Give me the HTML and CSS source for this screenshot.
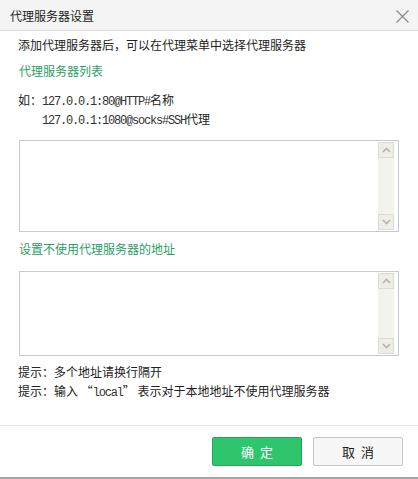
FILE: index.html
```html
<!DOCTYPE html>
<html lang="zh-CN">
<head>
    <meta charset="UTF-8">
    <title>代理服务器设置</title>
    <link rel="stylesheet" href="styles.css">
</head>
<body>

<div class="dialog">
    <div class="dialog-head">
        <span class="dialog-title">代理服务器设置</span>
        <svg class="close-btn" width="13" height="13" viewBox="0 0 13 13">
            <path d="M0.5 0.5 L12.5 12.5 M12.5 0.5 L0.5 12.5" stroke="#8a8a8a" stroke-width="1.2" fill="none"/>
        </svg>
    </div>

    <div class="dialog-body">
        <p class="intro">添加代理服务器后，可以在代理菜单中选择代理服务器</p>

        <!-- 代理列表 -->
        <h3 class="section-title">代理服务器列表</h3>
        <div class="example">
            <div class="line">如：<span class="mono">127.0.0.1:80@HTTP#</span>名称</div>
            <div class="line indent"><span class="mono">127.0.0.1:1080@socks#SSH</span>代理</div>
        </div>
        <div class="field field-list">
            <textarea></textarea>
            <div class="scrollbar">
                <div class="scroll-btn">
                    <svg width="9" height="6" viewBox="0 0 9 6"><path d="M1 5 L4.5 1.5 L8 5" stroke="#b4b4ac" stroke-width="1.6" fill="none"/></svg>
                </div>
                <div class="scroll-btn">
                    <svg width="9" height="6" viewBox="0 0 9 6"><path d="M1 1 L4.5 4.5 L8 1" stroke="#b4b4ac" stroke-width="1.6" fill="none"/></svg>
                </div>
            </div>
        </div>

        <!-- 例外地址 -->
        <h3 class="section-title section-title-2">设置不使用代理服务器的地址</h3>
        <div class="field field-bypass">
            <textarea></textarea>
            <div class="scrollbar">
                <div class="scroll-btn">
                    <svg width="9" height="6" viewBox="0 0 9 6"><path d="M1 5 L4.5 1.5 L8 5" stroke="#b4b4ac" stroke-width="1.6" fill="none"/></svg>
                </div>
                <div class="scroll-btn">
                    <svg width="9" height="6" viewBox="0 0 9 6"><path d="M1 1 L4.5 4.5 L8 1" stroke="#b4b4ac" stroke-width="1.6" fill="none"/></svg>
                </div>
            </div>
        </div>

        <div class="tips">
            <div class="line">提示：多个地址请换行隔开</div>
            <div class="line">提示：输入 “<span class="mono">local</span>” 表示对于本地地址不使用代理服务器</div>
        </div>
    </div>

    <div class="dialog-foot">
        <button type="button" class="btn btn-ok">确&nbsp;&nbsp;定</button>
        <button type="button" class="btn btn-cancel">取&nbsp;&nbsp;消</button>
    </div>
</div>

</body>
</html>
```

FILE: styles.css
```css
body {
    margin: 0;
    background: #fff;
    font-family: "Noto Sans CJK SC", "Noto Sans", sans-serif;
    font-size: 12px;
    color: #222;
}
.dialog {
    width: 418px;
    height: 479px;
    box-sizing: border-box;
    border-bottom: 2px solid #a6a6a6;
    display: flex;
    flex-direction: column;
}
.dialog-head {
    height: 30px;
    background-color: #f4f4f4;
    border-bottom: 1px solid #dcdcdc;
    display: flex;
    align-items: center;
    justify-content: space-between;
    padding: 0 9px 0 10px;
}
.dialog-title {
    font-size: 12px;
    color: #222;
}
.close-btn {
    margin-top: 2px;
}
.dialog-body {
    padding: 0 18px 0 18px;
    flex: 1;
}
.intro {
    margin: 4px 0 0 0;
    line-height: 20px;
}
.section-title {
    margin: 6px 0 0 1px;
    font-size: 12px;
    font-weight: normal;
    line-height: 20px;
    color: #2c9d66;
}
.example {
    margin-top: 9px;
}
.line {
    height: 19px;
    line-height: 19px;
    overflow: hidden;
}
.indent {
    padding-left: 24px;
}
.mono {
    font-family: "Liberation Mono", monospace;
    font-size: 12px;
    line-height: 1;
    letter-spacing: -1.2px;
    color: #333;
}
.field {
    display: flex;
    margin-left: 1px;
    width: 380px;
    box-sizing: border-box;
    border: 1px solid #c3cbd2;
    background: #fff;
}
.field-list {
    margin-top: 12px;
    height: 92px;
}
.field-bypass {
    margin-top: 12px;
    height: 85px;
}
.section-title-2 {
    margin-top: 7px;
}
.field textarea {
    flex: 1;
    border: none;
    outline: none;
    resize: none;
    padding: 3px;
    font-family: inherit;
    font-size: 12px;
}
.scrollbar {
    width: 16px;
    margin: 1px 4px 1px 0;
    background-color: #f3f3ed;
    display: flex;
    flex-direction: column;
    justify-content: space-between;
}
.scroll-btn {
    height: 16px;
    box-sizing: border-box;
    border: 1px solid #dddcd4;
    background-color: #eeeee7;
    display: flex;
    align-items: center;
    justify-content: center;
}
.tips {
    margin-top: 6px;
}
.dialog-foot {
    border-top: 1px solid #e3e3e3;
    height: 52px;
    display: flex;
    justify-content: flex-end;
    align-items: flex-start;
    padding: 11px 15px 0 0;
    gap: 11px;
    box-sizing: border-box;
}
.btn {
    width: 90px;
    height: 29px;
    font-family: "Noto Sans CJK SC", sans-serif;
    font-size: 13px;
    border-radius: 2px;
    cursor: pointer;
    padding: 0;
}
.btn-ok {
    background-color: #2ec56d;
    border: 1px solid #22a659;
    color: #fff;
}
.btn-cancel {
    background-color: #f7f7f7;
    border: 1px solid #c6c6c6;
    color: #222;
}
```
